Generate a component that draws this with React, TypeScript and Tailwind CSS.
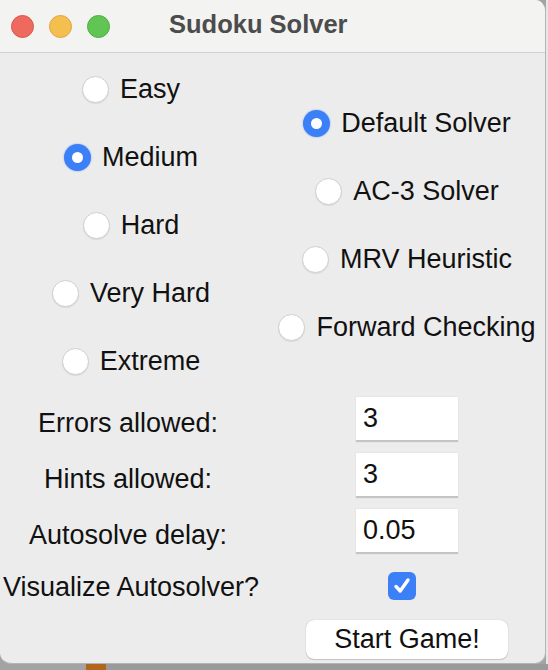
import React from "react";

const font = { fontFamily: '"Liberation Sans", Arial, sans-serif' };

const Radio = ({ checked, label }: { checked?: boolean; label: string }) => (
  <div className="flex items-center gap-[11px]">
    {checked ? (
      <span className="w-[27px] h-[27px] rounded-full bg-[#3b80f6] flex items-center justify-center shadow-[0_0_2px_rgba(59,128,246,0.6)]">
        <span className="w-[11px] h-[11px] rounded-full bg-white" />
      </span>
    ) : (
      <span className="w-[27px] h-[27px] rounded-full bg-white border border-[#cfcfcf] shadow-[0_1px_1px_rgba(0,0,0,0.08)]" />
    )}
    <span className="text-[27px] leading-none text-[#111]">{label}</span>
  </div>
);

const Entry = ({ value }: { value: string }) => (
  <div className="w-[102px] h-[45px] bg-white border-b-2 border-[#c4c4c4] shadow-[0_0_1px_rgba(0,0,0,0.15)] flex items-center px-[7px] text-[27px] text-[#111]">
    {value}
  </div>
);

const levels = ["Easy", "Medium", "Hard", "Very Hard", "Extreme"];
const solvers = ["Default Solver", "AC-3 Solver", "MRV Heuristic", "Forward Checking"];

const settings = [
  { label: "Errors allowed:", value: "3" },
  { label: "Hints allowed:", value: "3" },
  { label: "Autosolve delay:", value: "0.05" },
];

export default function App() {
  return (
    <div className="w-[548px] h-[670px] bg-[#a3a3a3] overflow-hidden" style={font}>
      <div className="flex h-[664px]">
        <div className="w-[546px] h-full bg-[#ececec] rounded-b-[11px] rounded-tr-[11px] border-r border-b border-[#b4b4b4] overflow-hidden flex flex-col">
          {/* title bar */}
          <div className="h-[53px] shrink-0 bg-[#f3f3f2] border-b border-[#d2d2d2] flex items-center">
            <div className="flex items-center gap-[15px] pl-[11px]">
              <span className="w-[23px] h-[23px] rounded-full bg-[#ee6a5f] border border-[#d9574d]" />
              <span className="w-[23px] h-[23px] rounded-full bg-[#f5bf4f] border border-[#dea63c]" />
              <span className="w-[23px] h-[23px] rounded-full bg-[#61c554] border border-[#50ad44]" />
            </div>
            <span className="ml-[59px] text-[25.5px] font-bold text-[#4c4c4c] pb-[3px]">Sudoku Solver</span>
          </div>

          {/* radio groups */}
          <div className="flex pt-[2px]">
            <div className="w-[262px] flex flex-col items-center">
              {levels.map((l) => (
                <div key={l} className="h-[68px] flex items-center">
                  <Radio label={l} checked={l === "Medium"} />
                </div>
              ))}
            </div>
            <div className="flex-1 flex flex-col items-center justify-center pl-[7px]">
              {solvers.map((s) => (
                <div key={s} className="h-[68px] flex items-center">
                  <Radio label={s} checked={s === "Default Solver"} />
                </div>
              ))}
            </div>
          </div>

          {/* settings */}
          <div className="grid grid-cols-[262px_1fr]">
            {settings.map((s) => (
              <React.Fragment key={s.label}>
                <div className="h-[56px] flex items-center justify-center text-[27px] text-[#111] pr-[6px]">
                  {s.label}
                </div>
                <div className="h-[56px] flex items-start pt-[2px] pl-[94px]">
                  <Entry value={s.value} />
                </div>
              </React.Fragment>
            ))}
            <div className="h-[46px] flex items-center justify-center text-[27px] text-[#111] pt-[2px]">
              Visualize Autosolver?
            </div>
            <div className="h-[46px] flex items-center pl-[126px]">
              <span className="w-[28px] h-[28px] rounded-[6px] bg-[#3b80f6] flex items-center justify-center">
                <svg width="20" height="20" viewBox="0 0 20 20" fill="none">
                  <path d="M4 10.5 L8.2 15 L16 4" stroke="white" strokeWidth="3.4" strokeLinecap="round" strokeLinejoin="round" />
                </svg>
              </span>
            </div>
            <div />
            <div className="pt-[11px] pl-[44px]">
              <button className="w-[202px] h-[39px] bg-white rounded-[8px] shadow-[0_0_1px_rgba(0,0,0,0.3),0_1px_1px_rgba(0,0,0,0.15)] text-[27px] text-[#111] leading-none">
                Start Game!
              </button>
            </div>
          </div>
        </div>
        <div className="w-[2px] h-full bg-[#e6e6e6]" />
      </div>
      <div className="flex h-[6px]">
        <div className="w-[86px] bg-[#a3a3a3]" />
        <div className="w-[20px] bg-[#b0661f]" />
        <div className="flex-1 bg-[#9a9a9a]" />
      </div>
    </div>
  );
}
